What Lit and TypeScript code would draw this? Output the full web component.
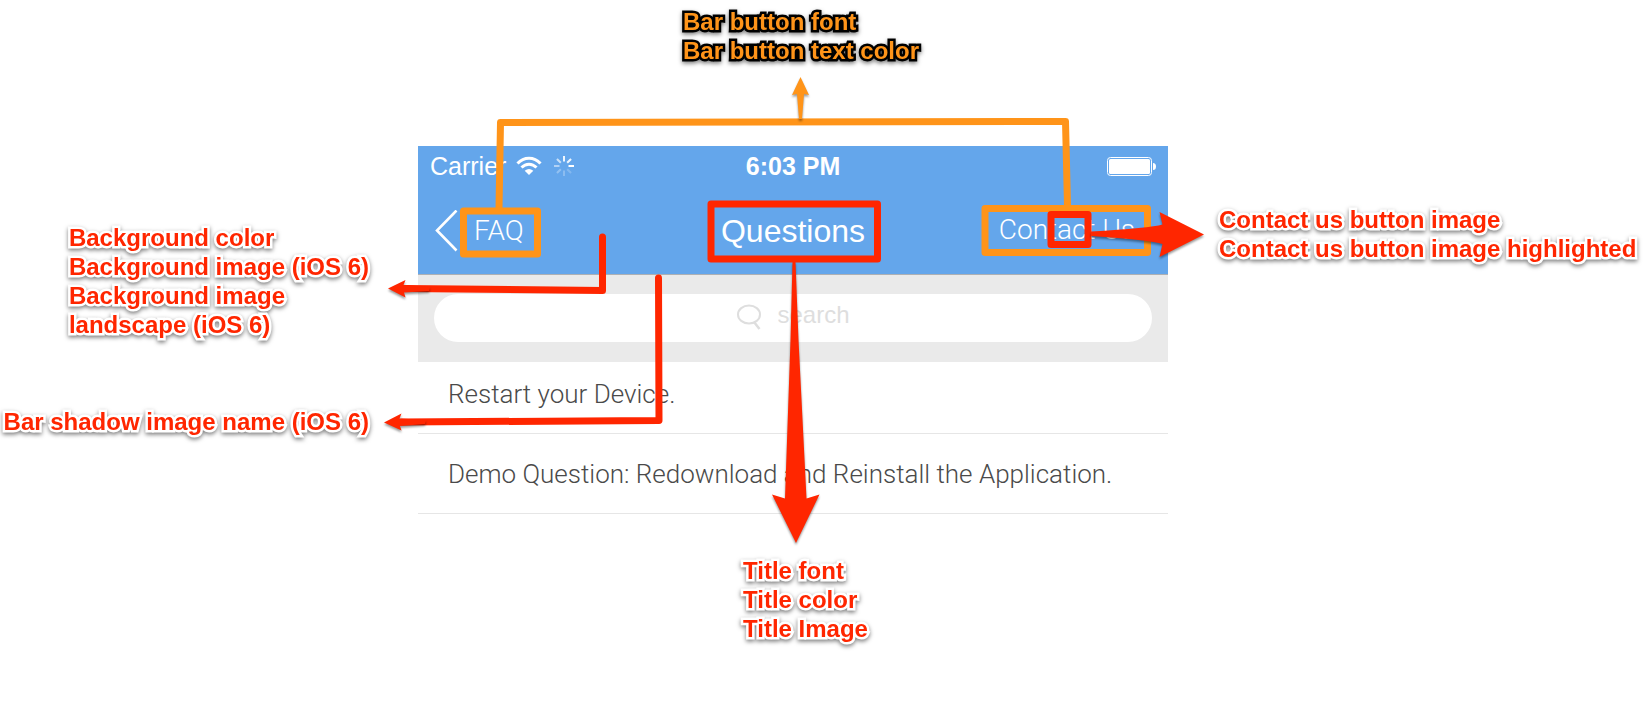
import { LitElement, html, css, svg } from "lit";
import { customElement, property } from "lit/decorators.js";

/** A block of bold annotation text, one line per entry. */
@customElement("callout-note")
class CalloutNote extends LitElement {
  @property({ attribute: false }) lines: string[] = [];
  @property({ reflect: true }) tone = "red";

  static styles = css`
    :host {
      display: block;
      font: bold 24px/29px "Liberation Sans", Arial, sans-serif;
      white-space: nowrap;
      color: #ff2600;
      -webkit-text-stroke: 5px #fff;
      paint-order: stroke fill;
      stroke-linejoin: round;
      filter: drop-shadow(0 2px 2px rgba(0, 0, 0, 0.5));
    }
    :host([tone="orange"]) {
      color: #ff9419;
      -webkit-text-stroke-color: #000;
    }
    .line {
      margin: 0;
    }
  `;

  render() {
    return this.lines.map((line) => html`<p class="line">${line}</p>`);
  }
}

/** The help-centre screen: status bar, navigation bar, search and questions. */
@customElement("phone-screen")
class PhoneScreen extends LitElement {
  static styles = css`
    :host {
      display: block;
      font-family: "Liberation Sans", Arial, sans-serif;
    }
    svg {
      display: block;
      flex: none;
    }
    .bars {
      background: #64a6eb;
      color: #fff;
      border-bottom: 1px solid #adb0b4;
    }
    .status,
    .nav {
      display: grid;
      grid-template-columns: 1fr auto 1fr;
      align-items: center;
    }
    .status {
      height: 40px;
      padding: 0 12px;
      font-size: 25px;
    }
    .network {
      display: flex;
      align-items: center;
      gap: 10px;
    }
    .time {
      font-weight: bold;
    }
    .battery {
      justify-self: end;
    }
    .nav {
      box-sizing: border-box;
      height: 88px;
      padding: 2px 16px 0;
    }
    .nav button {
      display: flex;
      align-items: center;
      gap: 16px;
      padding: 0;
      border: 0;
      background: none;
      color: inherit;
      font: 300 28px/32px Roboto, "Liberation Sans", sans-serif;
    }
    .nav .contact {
      justify-self: end;
      padding: 0 17px 2px 0;
    }
    .title {
      margin: 0;
      font-weight: normal;
      font-size: 32px;
      line-height: 40px;
    }
    .search {
      padding: 19px 16px 20px;
      background: #eaeaea;
    }
    .field {
      display: flex;
      justify-content: center;
      align-items: center;
      gap: 17px;
      height: 48px;
      border-radius: 24px;
      background: #fff;
    }
    .field input {
      width: 72px;
      height: 28px;
      margin: 0 0 6px;
      padding: 0;
      border: 0;
      outline: 0;
      background: none;
      color: #4a4a4a;
      font: 24px/28px "Liberation Sans", Arial, sans-serif;
    }
    .field input::placeholder {
      color: #dedede;
      opacity: 1;
    }
    .questions {
      margin: 0;
      padding: 0;
      list-style: none;
    }
    .questions li {
      border-bottom: 1px solid #e6e6e6;
    }
    .questions a {
      display: block;
      padding: 20px 30px 19px;
      color: #4a4a4a;
      text-decoration: none;
      font: 300 26px/40px Roboto, "Liberation Sans", sans-serif;
    }
    .questions li:first-child a {
      padding: 12px 30px 19px;
    }
  `;

  private spokes = [1, 0.2, 0.25, 0.3, 0.5, 0.65, 0.9, 0.9];

  render() {
    return html`
      <header class="bars">
        <div class="status">
          <div class="network">
            <span>Carrier</span>
            <svg width="26" height="20" viewBox="0 0 26 20" fill="none" stroke="#fff" stroke-width="3">
              <path d="M1.5 7.5C8 .5 18 .5 24.500 7.500" />
              <path d="M5.500 11.500C10 7 16 7 20.500 11.500" />
              <path d="M13 19L8.700 14.700Q13 11.300 17.300 14.700Z" fill="#fff" stroke="none" />
            </svg>
            <svg width="24" height="22" viewBox="-12 -11 24 22" stroke="#fff" stroke-width="2">
              ${this.spokes.map(
                (o, i) => svg`<path d="M4.500 0H10" opacity=${o} transform="rotate(${i * 45})" />`
              )}
            </svg>
          </div>
          <span class="time">6:03 PM</span>
          <svg class="battery" width="50" height="20" viewBox="0 0 50 20">
            <rect x="1.500" y="1.500" width="44" height="18" rx="3" fill="none" stroke="#fff" />
            <rect x="3" y="3" width="41" height="15" rx="1.500" fill="#fff" />
            <path d="M47 7Q50 7 50 10.500T47 14Z" fill="#fff" />
          </svg>
        </div>
        <nav class="nav">
          <button>
            <svg width="24" height="42" viewBox="0 0 24 42" fill="none" stroke="#fff" stroke-width="2.600">
              <path d="M22.500 .5L3 20.500L22.500 40.500" />
            </svg>
            FAQ
          </button>
          <h1 class="title">Questions</h1>
          <button class="contact">Contact Us</button>
        </nav>
      </header>
      <div class="search">
        <label class="field">
          <svg width="24" height="28" viewBox="0 0 24 28" fill="none" stroke="#dedede" stroke-width="2">
            <ellipse cx="12" cy="10.500" rx="11" ry="9" />
            <path d="M17 18L22.500 25" stroke-width="2.500" />
          </svg>
          <input type="text" placeholder="search" aria-label="search" />
        </label>
      </div>
      <ul class="questions">
        <li><a href="#restart">Restart your Device.</a></li>
        <li><a href="#reinstall">Demo Question: Redownload and Reinstall the Application.</a></li>
      </ul>
    `;
  }
}

@customElement("app-root")
class AppRoot extends LitElement {
  static styles = css`
    :host {
      display: block;
      min-height: 100vh;
      background: #fff;
    }
    .board {
      display: grid;
      grid-template-columns: minmax(370px, 418fr) 750px minmax(430px, 479fr);
      grid-template-rows: minmax(146px, auto) auto auto;
    }
    .top {
      grid-column: 2;
      padding: 7px 0 0 265px;
    }
    .left {
      grid-column: 1;
      grid-row: 2;
      display: flex;
      flex-direction: column;
      align-items: flex-end;
      gap: 68px;
      padding: 77px 49px 0 0;
    }
    .screen {
      grid-column: 2;
      grid-row: 2;
      position: relative;
    }
    .marks {
      position: absolute;
      inset: 0;
      width: 100%;
      overflow: visible;
      pointer-events: none;
    }
    .right {
      grid-column: 3;
      grid-row: 2;
      padding: 59px 0 0 51px;
    }
    .bottom {
      grid-column: 2;
      padding: 42px 0 0 325px;
    }
    .line {
      fill: none;
      stroke-width: 7px;
      stroke-linejoin: round;
      stroke-linecap: round;
    }
    .orange {
      stroke: #ff9419;
    }
    .red {
      stroke: #ff2600;
    }
    .head {
      filter: drop-shadow(0 2px 1px rgba(0, 0, 0, 0.4));
    }
    .fill-orange {
      fill: #ff9419;
    }
    .fill-red {
      fill: #ff2600;
    }
  `;

  render() {
    return html`
      <main class="board">
        <callout-note class="top" tone="orange" .lines=${["Bar button font", "Bar button text color"]}></callout-note>
        <div class="left">
          <callout-note
            .lines=${["Background color", "Background image (iOS 6)", "Background image", "landscape (iOS 6)"]}
          ></callout-note>
          <callout-note .lines=${["Bar shadow image name (iOS 6)"]}></callout-note>
        </div>
        <div class="screen">
          <phone-screen></phone-screen>
          <svg class="marks" viewBox="418 146 750 368" aria-hidden="true">
            <path class="line orange" d="M499 208L500.500 122.500L1065.500 121.500L1067.500 206" />
            <rect class="line orange" x="463.500" y="211" width="74" height="43" />
            <rect class="line orange" x="985" y="208.500" width="162.500" height="44" />
            <path class="head fill-orange" d="M800.500 77L809 95L804 94L802 119H799L797 94L792 95Z" />
            <path class="line red" d="M602.500 237V290.500L405 288.500" />
            <path class="head fill-red" d="M388 288.500L405.500 280L403.500 285L430 287L429 291L404 292.500L405.500 297.500Z" />
            <path class="line red" d="M658.500 278L659 420.500L402 422" />
            <path class="head fill-red" d="M384 422.500L401.500 413.500L399.500 418.500L426 420L425 424L400 426L401.500 430.500Z" />
            <rect class="line red" x="711" y="204" width="166.500" height="55" />
            <path
              class="head fill-red"
              d="M792.500 262H795.500L798.500 340L806.500 498.500L819.500 494.500L796 543L772 494.500L785 498.500L790.500 340Z"
            />
            <rect class="line red" x="1051" y="214.500" width="37" height="30" />
            <path
              class="head fill-red"
              d="M1091 231.500Q1150 228 1162.500 224.500L1159.500 212L1204 234.500L1159.500 257L1162.500 244Q1150 240 1091 236Z"
            />
          </svg>
        </div>
        <callout-note
          class="right"
          .lines=${["Contact us button image", "Contact us button image highlighted"]}
        ></callout-note>
        <callout-note class="bottom" .lines=${["Title font", "Title color", "Title Image"]}></callout-note>
      </main>
    `;
  }
}
